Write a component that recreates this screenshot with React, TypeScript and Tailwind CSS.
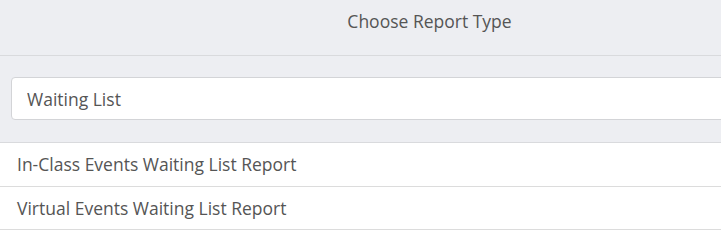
const reports = [
  "In-Class Events Waiting List Report",
  "Virtual Events Waiting List Report",
];

export default function App() {
  return (
    <div
      className="w-[721px] h-[240px] overflow-hidden bg-white text-[#555]"
      style={{ fontFamily: '"Open Sans", "Noto Sans", sans-serif' }}
    >
      <div className="w-[859px]">
        <div className="bg-[#edeef2] border-b border-[#d9dadd] pt-[9px] pb-[21px] text-center text-[17.5px] leading-[25px]">
          Choose Report Type
        </div>
        <div className="bg-[#edeef2] px-[11px] pt-[21px] pb-[22px] border-b border-[#d9dadd]">
          <input
            type="text"
            defaultValue="Waiting List"
            className="w-full h-[43px] rounded-[4px] border border-[#d3d4d7] bg-white pl-[15px] text-[17.5px] text-[#555] outline-none"
          />
        </div>
        <ul>
          {reports.map((r, i) => (
            <li
              key={r}
              className={
                i === 0
                  ? "h-[44px] border-b border-[#dcdcdc] pl-[17px] flex items-center text-[17.5px]"
                  : "h-[43px] border-b border-[#dcdcdc] pl-[17px] flex items-center text-[17.5px]"
              }
            >
              {r}
            </li>
          ))}
        </ul>
      </div>
    </div>
  );
}
